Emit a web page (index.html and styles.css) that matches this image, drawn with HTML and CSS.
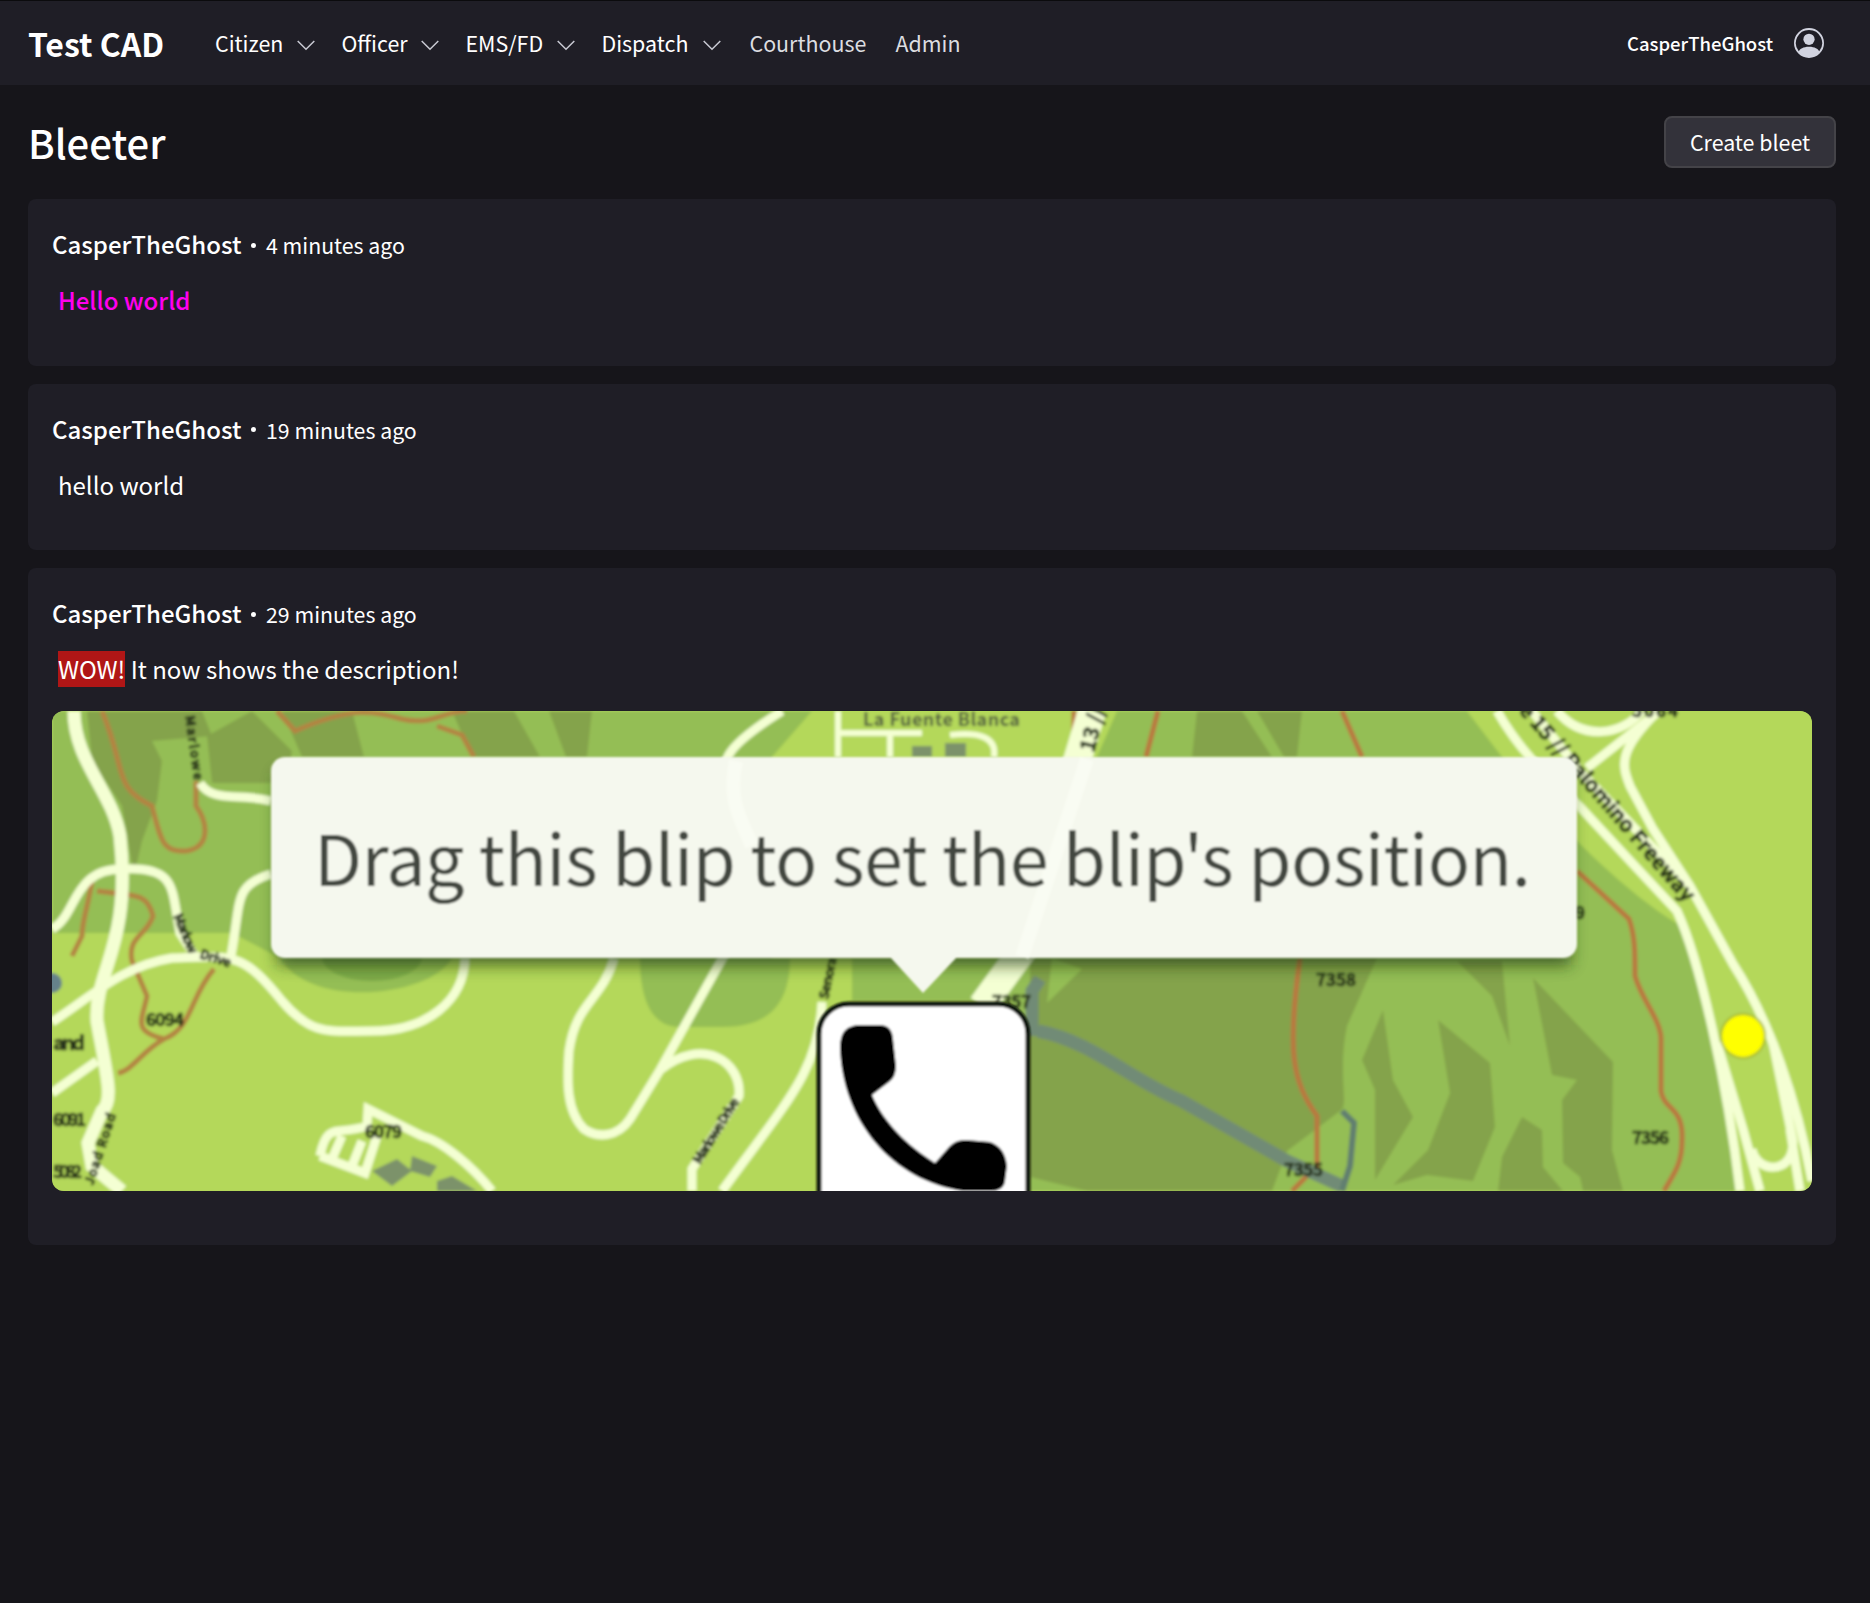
FILE: index.html
```html
<!DOCTYPE html>
<html lang="en">
<head>
<meta charset="utf-8">
<title>Bleeter</title>
<link rel="stylesheet" href="styles.css">
</head>
<body>
<header class="navbar">
  <a class="brand">Test CAD</a>
  <nav class="menu">
    <a class="item citizen">Citizen<svg class="chev" viewBox="0 0 18 11"><path d="M.7 1 9 9.3 17.3 1"/></svg></a>
    <a class="item officer">Officer<svg class="chev" viewBox="0 0 18 11"><path d="M.7 1 9 9.3 17.3 1"/></svg></a>
    <a class="item ems">EMS/FD<svg class="chev" viewBox="0 0 18 11"><path d="M.7 1 9 9.3 17.3 1"/></svg></a>
    <a class="item dispatch">Dispatch<svg class="chev" viewBox="0 0 18 11"><path d="M.7 1 9 9.3 17.3 1"/></svg></a>
    <a class="item plain court">Courthouse</a>
    <a class="item plain">Admin</a>
  </nav>
  <div class="account">
    <span>CasperTheGhost</span>
    <svg class="avatar" viewBox="0 0 16 16"><path d="M11 6a3 3 0 1 1-6 0 3 3 0 0 1 6 0z"/><path fill-rule="evenodd" d="M0 8a8 8 0 1 1 16 0A8 8 0 0 1 0 8zm8-7a7 7 0 0 0-5.468 11.37C3.242 11.226 4.805 10 8 10s4.757 1.225 5.468 2.37A7 7 0 0 0 8 1z"/></svg>
  </div>
</header>
<main class="page">
  <div class="page-head">
    <h1>Bleeter</h1>
    <button class="create">Create bleet</button>
  </div>
  <section class="feed">
    <article class="bleet">
      <div class="meta"><b>CasperTheGhost</b><i class="dot"></i><time>4 minutes ago</time></div>
      <p class="body"><strong class="magenta">Hello world</strong></p>
    </article>
    <article class="bleet">
      <div class="meta"><b>CasperTheGhost</b><i class="dot"></i><time>19 minutes ago</time></div>
      <p class="body">hello world</p>
    </article>
    <article class="bleet">
      <div class="meta"><b>CasperTheGhost</b><i class="dot"></i><time>29 minutes ago</time></div>
      <p class="body"><mark>WOW!</mark> It now shows the description!</p>
      <svg class="map" viewBox="0 0 1760 480">
        <defs>
          <filter id="soft" x="0" y="0" width="1" height="1"><feGaussianBlur stdDeviation="1.6"/></filter>
          <filter id="crisp" x="-.1" y="-.1" width="1.2" height="1.2"><feGaussianBlur stdDeviation="1.1"/></filter>
          <filter id="shade" x="-.1" y="-.2" width="1.2" height="1.5"><feGaussianBlur stdDeviation="8"/></filter>
        </defs>
        <rect width="1760" height="480" fill="#b4d85a"/>
        <g filter="url(#soft)">
          <rect width="1760" height="480" fill="#b4d85a"/>
          <g fill="#94be54">
            <path d="M0 0H760L720 46V247H400C380 285 260 300 228 247L180 222H0z"/>
            <path d="M588 247H738C738 295 715 316 670 316H628C600 316 588 290 588 247z"/>
            <path d="M800 247H1000V480H970V290H800z"/>
            <path d="M1065 0H1415L1450 46 1525 130C1570 175 1610 205 1630 215 1665 310 1680 390 1688 480H960V240z"/>
          </g>
          <g fill="#84a34b">
            <path d="M35 0H150L160 25 100 30 110 50 105 90 90 130 82 165 70 95 40 50z"/>
            <path d="M155 25 200 0 240 40 235 72H160z"/>
            <path d="M230 0H300L312 46H250z"/>
            <path d="M400 0H462L488 46H420zM497 0H540L535 46H514z"/>
            <path d="M1145 0H1190L1220 46H1140zM1205 0H1250L1245 46H1232z"/>
            <path d="M978 247H1325L1295 315C1285 365 1298 395 1288 400L1235 440 1220 480H1035L978 466z"/>
            <path d="M1331 299 1310 349 1323 379V469L1361 406 1341 369z"/>
            <path d="M1386 309 1438 352 1443 416 1421 470 1375 464 1341 474 1376 439 1398 382zM1470 406 1490 419 1491 456 1511 480H1446L1450 446z"/>
            <path d="M1405 250H1450L1458 335 1440 285zM1481 267 1561 351 1560 439 1571 480H1531L1528 466 1511 452 1510 389 1525 369 1500 364z"/>
          </g>
          <ellipse cx="320" cy="246" rx="50" ry="24" fill="#7eaa48"/>
          <path d="M1000 247 1030 258 995 292z" fill="#94be54"/>
          <g fill="none" stroke="#b38443" stroke-width="5">
            <path d="M50 0C75 60 60 75 100 95 110 135 112 140 134 140 160 136 155 110 144 95V70"/>
            <path d="M40 170C35 200 30 210 30 225L20 245M45 180C80 185 95 180 101 205 95 225 75 225 80 250L95 285C90 310 80 320 112 328M112 328C140 318 138 285 162 258M112 328C90 340 80 360 66 362"/>
            <path d="M225 0 243 20C300-5 320 0 350 8 380 15 390 0 415 0M385 15 410 24 422 46"/>
            <path d="M1022 0V40M1106 0 1094 46M1290 0 1310 46" stroke="#b97840"/>
            <path d="M1248 247C1235 340 1240 370 1265 405V455L1240 480" stroke="#b97840"/>
            <path d="M1525 160 1577 208C1583 225 1583 240 1583 265 1590 290 1610 310 1609 330V380C1612 400 1632 395 1630 430 1630 455 1620 465 1612 480" stroke="#b97840"/>
          </g>
          <g fill="none" stroke="#718b76" stroke-width="13"><path d="M980 325V280L988 268M986 320C1040 330 1080 370 1130 390L1235 450 1290 475"/><path d="M1290 400 1302 412 1298 455 1290 480" stroke="#607e70" stroke-width="6"/></g>
          <g fill="none" stroke="#f4ffd3" stroke-width="9">
            <path d="M22 0C22 50 60 80 68 125 80 235 42 260 45 310 55 365 62 390 50 400L36 432 40 455 70 480" stroke-width="13"/>
            <path d="M0 218C25 205 20 158 70 158 120 155 120 175 125 205L128 222 145 248"/>
            <path d="M0 311C40 285 70 255 120 247 180 245 190 240 230 290 260 325 275 320 320 320 375 320 412 290 413 247M178 250C190 190 180 175 219 163M148 72C160 92 190 82 219 90"/>
            <path d="M0 382 45 350"/>
            <path d="M730 0C650 50 675 55 684 105 710 160 750 190 680 230L608 359 578 408C565 427 545 427 532 418 514 400 515 370 517 340 524 290 550 290 562 247M608 359C650 325 690 350 687 385L640 458V480"/>
            <path d="M786 0V46M786 22H870M838 22V46M898 24C930 20 945 28 942 46" stroke-width="6"/>
            <path d="M770 291C767 360 735 390 670 480"/>
            <path d="M1040 0 1025 50 970 240 930 295" stroke-width="28"/>
            <path d="M1445 0C1468 40 1490 60 1528 96L1581 153 1625 200C1648 250 1675 370 1688 480M1480 0 1528 60 1638 175M1505 0C1530 30 1570 25 1590 0"/>
            <path d="M1606 0C1565 40 1570 55 1578 75L1601 118 1638 175 1681 253C1718 310 1745 390 1760 470M1535 57 1605 2"/>
            <path d="M1665 332 1691 418 1708 480M1721 332 1741 430C1742 465 1704 462 1700 438M1738 418 1748 480"/>
            <path d="M268 445C275 410 285 425 315 415L316 398 370 425C390 430 420 455 440 480M268 445 313 462 325 425M290 425 280 448M310 430 300 455"/>
          </g>
          <g fill="#7c926a"><path d="M320 460 345 448 360 460 340 475zM360 445 385 455 378 466 358 460zM385 470 400 465 425 480H385z"/><path d="M860 35h20v11h-20zM893 32h21v14h-21z"/></g>
          <circle cx="0" cy="272" r="10" fill="#65818a"/>
          <g class="label">
            <text x="811" y="15" textLength="157" class="place">La Fuente Blanca</text>
            <text x="94" y="315" textLength="38">6094</text>
            <text x="1" y="339" textLength="32" font-size="20">and</text>
            <text x="1" y="415" textLength="33">6091</text>
            <text x="1" y="467" textLength="29">5082</text>
            <text x="313" y="427" textLength="37">6079</text>
            <text x="940" y="297" textLength="39">7357</text>
            <text x="1264" y="275" textLength="40">7358</text>
            <text x="1232" y="465" textLength="39">7355</text>
            <text x="1580" y="433" textLength="37">7356</text>
            <text x="1580" y="6" textLength="46">5064</text>
            <text x="1498" y="208" textLength="35">7359</text>
            <text transform="translate(1042 42) rotate(-76)" class="road">13 //</text>
            <text transform="translate(1466 0) rotate(49)" class="road" textLength="255">e 15 // Palomino Freeway</text>
            <text transform="translate(133 5) rotate(82)" textLength="65" class="street">Marlowe</text>
            <text transform="translate(121 205) rotate(67)" textLength="42" class="street">Marlow</text>
            <text transform="translate(147 247) rotate(17)" textLength="32" class="street">Drive</text>
            <text transform="translate(648 454) rotate(-58)" textLength="75" class="street">Marlowe Drive</text>
            <text transform="translate(776 289) rotate(-78)" textLength="43" class="street">Senora</text>
            <text transform="translate(41 475) rotate(-72)" textLength="75" class="street">Joad Road</text>
          </g>
          <circle cx="1691" cy="325" r="22" fill="#ff0" stroke="#a5b72c" stroke-width="2"/>
        </g>
        <path d="M225 62H1519V254H225z" fill="#1d3411" opacity=".7" filter="url(#shade)"/>
        <g filter="url(#crisp)">
          <rect x="219" y="46" width="1306" height="201" rx="14" fill="#f5f8ee"/>
          <path d="M838 246H905L871 282z" fill="#f5f8ee"/>
          <path d="M684 50C675 90 690 110 700 135M1035 48 970 246" stroke="#fcfff6" stroke-width="14" opacity=".6" fill="none"/>
          <text class="tip" x="262" y="175" textLength="1217">Drag this blip to set the blip's position.</text>
          <rect x="767" y="293" width="209" height="230" rx="30" fill="#fff" stroke="#101309" stroke-width="5"/>
          <path d="M788 336Q788 314 808 314H828Q840 314 841 328L844 355Q844 366 837 371L820 384C832 412 855 434 883 452L897 436Q904 428 915 429L938 431Q953 436 955 455L953 470Q952 480 938 480H912C840 470 790 410 788 336z"/>
        </g>
      </svg>
    </article>
  </section>
</main>
</body>
</html>
```
FILE: styles.css
```css
* { box-sizing: border-box; }
body {
  margin: 0;
  min-height: 1603px;
  background: #16151a;
  color: #fff;
  font-family: "Noto Sans CJK SC", "Noto Sans", sans-serif;
}
.navbar {
  display: flex;
  align-items: center;
  height: 85px;
  padding: 0 46px 0 28px;
  border-top: 1px solid #0b0b0d;
  background: #1f1e26;
}
.brand { width: 187px; font-size: 32px; font-weight: 700; line-height: 44px; padding-bottom: 1px; }
.menu { display: flex; align-items: center; gap: 26.5px; font-size: 21.4px; line-height: 32px; padding-bottom: 1px; }
.item { display: flex; align-items: center; justify-content: space-between; }
.citizen { width: 100px; }
.officer { width: 97.5px; }
.ems { width: 109.5px; }
.dispatch { width: 119.5px; }
.court { margin-left: 2px; width: 119.5px; }
.plain { color: #dcdde0; }
.chev { width: 18px; height: 11px; margin-top: 5px; fill: none; stroke: #c9cad3; stroke-width: 1.5; }
.account { display: flex; align-items: center; gap: 21px; margin-left: auto; font-size: 18.5px; font-weight: 500; line-height: 30px; }
.avatar { width: 30px; height: 30px; margin-bottom: 1px; fill: #d1d3df; }
.page { padding: 31px 34px 0 28px; }
.page-head { display: flex; justify-content: space-between; height: 52px; align-items: center; }
h1 { margin: 0; font-size: 40px; font-weight: 500; line-height: 50px; }
.create {
  width: 172px;
  height: 52px;
  padding: 0;
  border: 2px solid #444348;
  border-radius: 8px;
  background: #33323a;
  color: #fff;
  font: 21.4px/32px "Noto Sans CJK SC", "Noto Sans", sans-serif;
}
.feed { display: flex; flex-direction: column; gap: 18px; margin-top: 31px; }
.bleet { min-height: 166.5px; padding: 27px 24px 47px; border-radius: 8px; background: #1f1e26; }
.meta { display: flex; align-items: baseline; height: 36px; line-height: 36px; }
.meta b { flex: 0 0 199px; font-size: 24px; font-weight: 500; }
.meta time { padding-left: 10px; font-size: 21.3px; }
.dot { flex: 0 0 5px; height: 5px; border-radius: 50%; background: #fff; align-self: center; margin-top: 2px; }
.body { margin: 20px 0 0; padding-left: 6px; height: 36px; font-size: 24px; line-height: 35px; }
.magenta { color: #f0e; font-weight: 500; }
mark { display: inline-block; height: 36px; background: #b01616; color: #fff; }
.map { display: block; width: 1760px; height: 480px; margin: 24px 0 7px; border-radius: 12px; overflow: hidden; }
.label { font-size: 17px; font-weight: 700; fill: #26321a; stroke: #26321a; stroke-width: .7; }
.place { font-size: 18px; fill: #4d5940; stroke: none; }
.road { font-size: 21px; }
.street { font-size: 13px; }
.tip { font-size: 70px; font-weight: 400; fill: #434640; }
```
